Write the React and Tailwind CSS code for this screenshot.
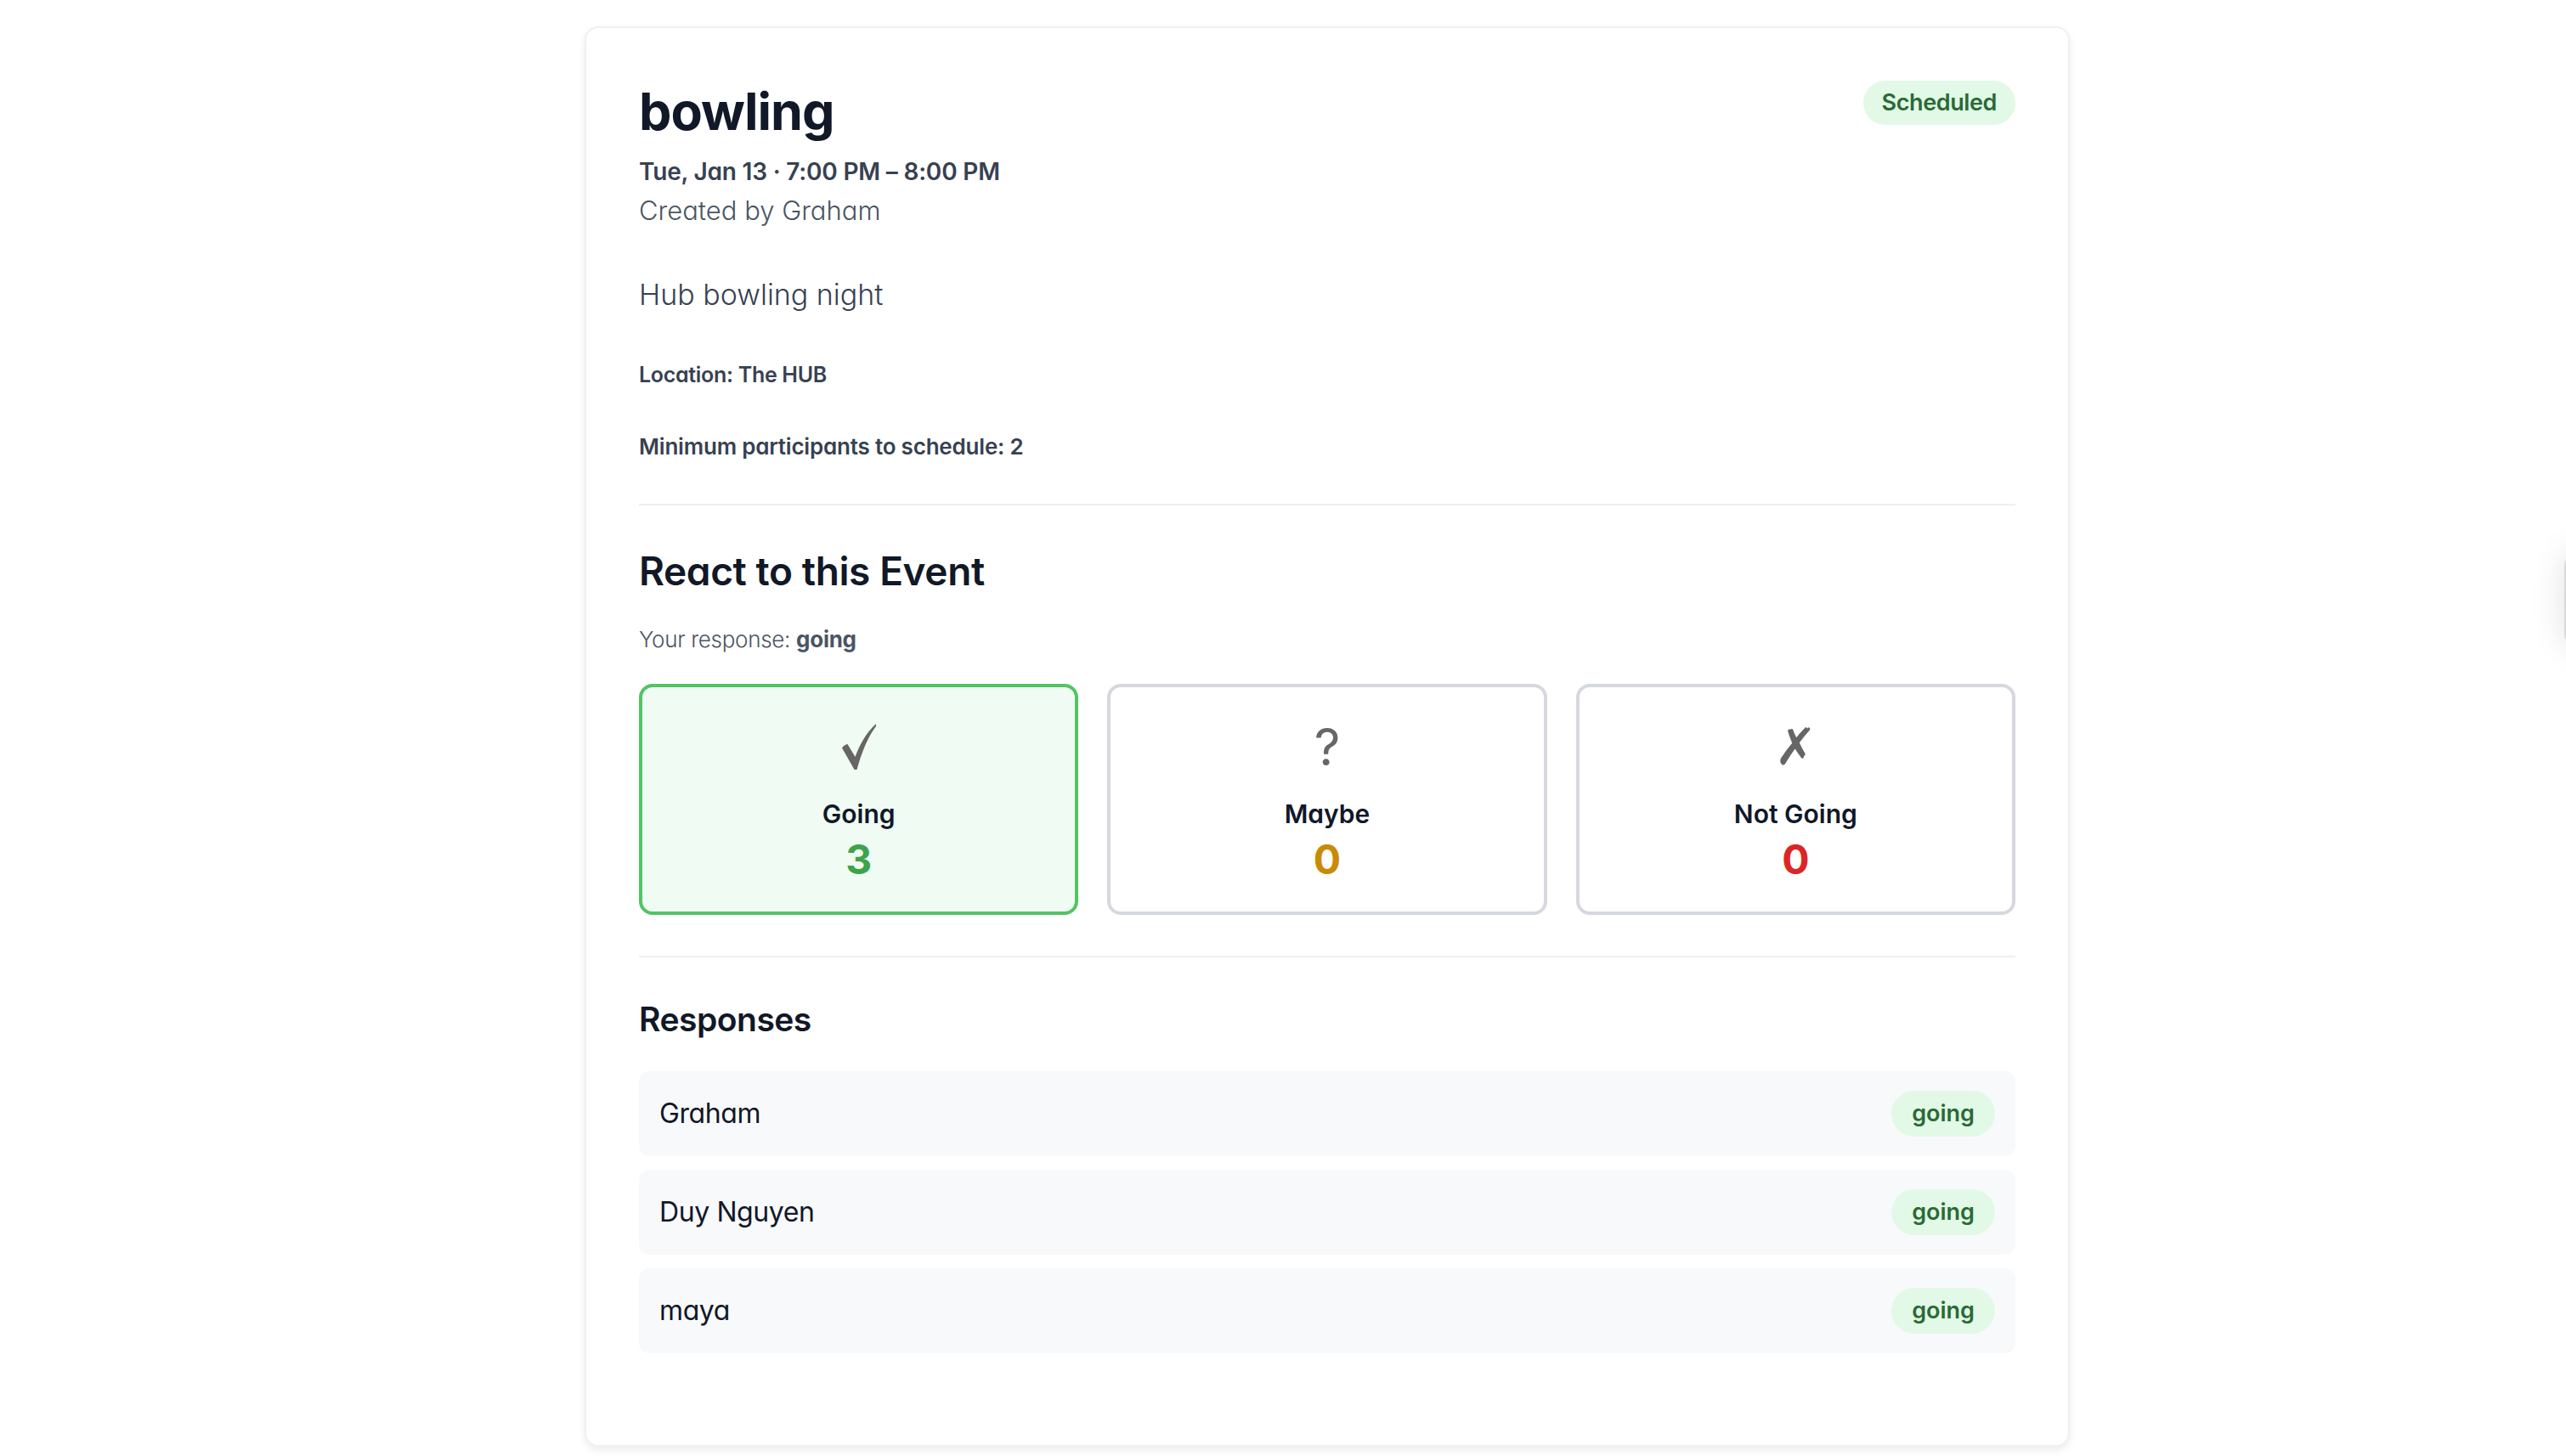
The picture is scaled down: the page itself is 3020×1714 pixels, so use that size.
import React from "react";

function CheckIcon() {
  return (
    <svg width="40" height="54" viewBox="0 0 40 54" aria-hidden="true">
      <path
        d="M0 28.5 C1.5 26 4 24.5 6.5 24 L15.5 39 C21 24 29 10 40 0 L40 3 C31.5 14 23.5 32 17.5 54 L14.5 54 Z"
        fill="#666666"
      />
    </svg>
  );
}

const options = [
  {
    icon: <CheckIcon />,
    iconClass: "",
    label: "Going",
    count: 3,
    color: "text-[#3da34b]",
    active: true,
  },
  {
    icon: "?",
    iconClass: "font-['Inter',sans-serif] text-[60px] font-normal",
    label: "Maybe",
    count: 0,
    color: "text-[#ca8a04]",
    active: false,
  },
  {
    icon: "✗",
    iconClass: "font-['DejaVu_Sans',sans-serif] text-[60px] font-bold",
    label: "Not Going",
    count: 0,
    color: "text-[#dc2626]",
    active: false,
  },
];

const responses = ["Graham", "Duy Nguyen", "maya"];

function OptionCard({ icon, iconClass, label, count, color, active }) {
  return (
    <div
      className={
        active
          ? "flex h-[272px] flex-col items-center justify-center rounded-[16px] border-[4px] border-[#52c463] bg-[#f0fbf3]"
          : "flex h-[272px] flex-col items-center justify-center rounded-[16px] border-[4px] border-[#d5d8de] bg-white"
      }
    >
      <div className={"flex h-[64px] items-center leading-[64px] text-[#666666] " + iconClass}>{icon}</div>
      <div className="mt-[27px] text-[30px] font-semibold leading-[40px] text-[#111827]">{label}</div>
      <div className={"mt-[10px] text-[48px] font-bold leading-[48px] " + color}>{count}</div>
    </div>
  );
}

export default function App() {
  return (
    <div className="relative min-h-screen overflow-hidden bg-white font-['Inter',sans-serif] [font-feature-settings:'cv11']">
      <div className="flex justify-center pt-[31px] pl-[104px]">
        <div className="w-[1748px] rounded-[16px] border-[2px] border-[#f0f0f0] bg-white px-[62px] pt-[62px] pb-[108px] shadow-[0_4px_8px_rgba(0,0,0,0.08)]">
          <div className="flex items-start justify-between">
            <div>
              <h1 className="text-[61px] font-bold leading-[72px] tracking-[-1px] text-[#111827]">bowling</h1>
              <p className="mt-[15px] text-[28px] font-semibold leading-[40px] tracking-[-0.2px] text-[#374151]">
                Tue, Jan 13 · 7:00 PM – 8:00 PM
              </p>
              <p className="mt-[6px] text-[31px] font-light leading-[40px] text-[#4b5563]">Created by Graham</p>
            </div>
            <span className="flex h-[52px] items-center rounded-full bg-[#e1f9e6] px-[22px] text-[27px] font-semibold tracking-[-0.4px] text-[#2a6a36]">
              Scheduled
            </span>
          </div>

          <p className="mt-[55px] text-[34px] font-light leading-[48px] text-[#374151]">Hub bowling night</p>
          <p className="mt-[54px] text-[25px] font-semibold leading-[32px] tracking-[-0.3px] text-[#374151]">
            Location: The HUB
          </p>
          <p className="mt-[53px] text-[26px] font-semibold leading-[32px] tracking-[-0.2px] text-[#374151]">
            Minimum participants to schedule: 2
          </p>

          <div className="mt-[51px] h-[2px] bg-[#eeeff1]" />

          <h2 className="mt-[49px] text-[46px] font-semibold leading-[56px] tracking-[-0.4px] text-[#111827]">
            React to this Event
          </h2>
          <p className="mt-[35px] text-[26px] font-light leading-[36px] tracking-[-0.3px] text-[#4b5563]">
            Your response: <span className="font-bold text-[#4b5563]">going</span>
          </p>

          <div className="mt-[34px] grid grid-cols-3 gap-[34px]">
            {options.map((o) => (
              <OptionCard key={o.label} {...o} />
            ))}
          </div>

          <div className="mt-[48px] h-[2px] bg-[#eeeff1]" />

          <h3 className="mt-[45px] text-[39px] font-semibold leading-[56px] tracking-[-0.5px] text-[#111827]">
            Responses
          </h3>

          <div className="mt-[33px] flex flex-col gap-[16px]">
            {responses.map((name) => (
              <div
                key={name}
                className="flex h-[100px] items-center justify-between rounded-[12px] bg-[#f8f9fb] px-[24px]"
              >
                <span className="text-[32px] font-normal leading-[44px] tracking-[-0.4px] text-[#111827]">{name}</span>
                <span className="flex h-[54px] items-center rounded-full bg-[#e1f9e6] px-[24px] text-[27px] font-semibold text-[#2a6a36]">
                  going
                </span>
              </div>
            ))}
          </div>
        </div>
      </div>

      <div className="absolute top-[650px] left-[3018px] h-[112px] w-[200px] rounded-l-[16px] border-l-[2px] border-[#d9d9d9] bg-white shadow-[0_0_40px_rgba(0,0,0,0.12)]" />
    </div>
  );
}
